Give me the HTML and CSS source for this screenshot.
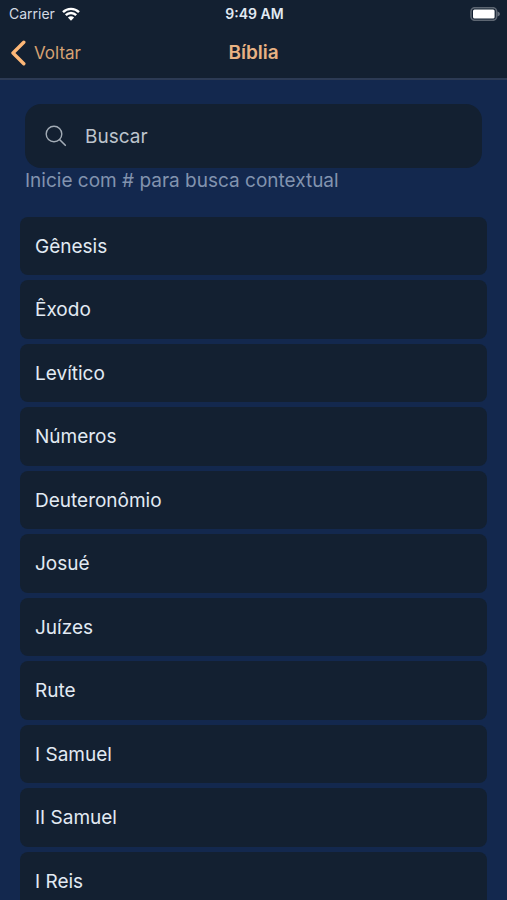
FILE: index.html
```
<!DOCTYPE html>
<html lang="pt-BR">
<head>
<meta charset="utf-8">
<meta name="viewport" content="width=device-width, initial-scale=1">
<title>Bíblia</title>
<link rel="stylesheet" href="styles.css">
</head>
<body>
<header class="header">
  <div class="status">
    <div class="carrier">
      <span>Carrier</span>
      <svg class="wifi" viewBox="0 0 18 14" aria-hidden="true">
        <path d="M1 5.2C5.4.7 12.6.7 17 5.2M3.8 8.2c2.9-2.9 7.500-2.900 10.400 0" fill="none" stroke="currentColor" stroke-width="2.400"/>
        <path d="M5.900 10.600c1.700-1.700 4.500-1.700 6.200 0L9 13.700z" fill="currentColor"/>
      </svg>
    </div>
    <time class="clock">9:49 AM</time>
    <svg class="battery" viewBox="0 0 30 14" aria-hidden="true">
      <rect x="1" y="0.700" width="25.600" height="12.600" rx="3.800" fill="none" stroke="#5d6672" stroke-width="1.600"/>
      <rect x="3" y="2.400" width="21.600" height="9.200" rx="1.500" fill="#fff"/>
      <path d="M27.500 4.500c3.200 1.200 3.200 3.800 0 5z" fill="#68717d"/>
    </svg>
  </div>
  <nav class="nav">
    <a class="back" href="#">
      <svg class="chevron" viewBox="0 0 16 26" aria-hidden="true"><path d="M13.800 2.200 3 13l10.800 10.800" fill="none" stroke="#fdb777" stroke-width="3.400" stroke-linecap="round" stroke-linejoin="round"/></svg>
      <span>Voltar</span>
    </a>
    <h1 class="title">Bíblia</h1>
  </nav>
</header>
<main class="main">
  <form class="search">
    <label class="field">
      <svg class="lens" viewBox="0 0 22 22" aria-hidden="true"><circle cx="9" cy="9" r="7.800" fill="none" stroke="currentColor" stroke-width="1.400"/><path d="m14.500 14.500 5.800 5.800" fill="none" stroke="currentColor" stroke-width="1.600" stroke-linecap="round"/></svg>
      <input class="input" type="text" placeholder="Buscar" aria-label="Buscar">
    </label>
    <p class="hint">Inicie com # para busca contextual</p>
  </form>
  <ul class="books">
    <li><a class="book" href="#">Gênesis</a></li>
    <li><a class="book" href="#">Êxodo</a></li>
    <li><a class="book" href="#">Levítico</a></li>
    <li><a class="book" href="#">Números</a></li>
    <li><a class="book" href="#">Deuteronômio</a></li>
    <li><a class="book" href="#">Josué</a></li>
    <li><a class="book" href="#">Juízes</a></li>
    <li><a class="book" href="#">Rute</a></li>
    <li><a class="book" href="#">I Samuel</a></li>
    <li><a class="book" href="#">II Samuel</a></li>
    <li><a class="book" href="#">I Reis</a></li>
  </ul>
</main>
</body>
</html>
```
FILE: styles.css
```
* {
  box-sizing: border-box;
}

body {
  margin: 0;
  height: 100vh;
  display: flex;
  flex-direction: column;
  overflow: hidden;
  background: #13284e;
  color: #e2eaf3;
  font-family: Inter, "Liberation Sans", sans-serif;
}

a {
  color: inherit;
  text-decoration: none;
}

.header {
  flex: none;
  background: #132031;
  border-bottom: 2px solid #2c3a54;
}

.status,
.nav {
  display: grid;
  grid-template-columns: 1fr auto 1fr;
  align-items: center;
}

.status {
  height: 27px;
  padding: 0 7px 0 9px;
  font-size: 14px;
}

.carrier {
  display: flex;
  align-items: center;
  gap: 7px;
  color: #d3dae3;
}

.wifi {
  width: 18px;
  height: 14px;
  color: #fff;
}

.clock {
  font-weight: 600;
}

.battery {
  width: 30px;
  height: 14px;
  justify-self: end;
}

.nav {
  height: 51px;
  padding: 0 10px;
}

.back {
  display: flex;
  align-items: center;
  gap: 8px;
  color: #d6a273;
  font-size: 17px;
}

.chevron {
  width: 16px;
  height: 26px;
}

.title {
  margin: 0;
  color: #e8b283;
  font-size: 19px;
  font-weight: 600;
}

.main {
  flex: 1;
  min-height: 0;
  padding: 24px 20px 0;
  overflow-y: auto;
  scrollbar-width: none;
}

.search {
  padding: 0 5px;
}

.field {
  display: flex;
  align-items: center;
  gap: 18px;
  height: 64px;
  padding: 0 20px;
  border-radius: 16px;
  background: #132031;
}

.lens {
  flex: none;
  width: 22px;
  height: 22px;
  color: #a3acb6;
}

.input {
  flex: 1;
  min-width: 0;
  padding: 0;
  border: 0;
  outline: 0;
  background: none;
  color: #e2eaf3;
  font: inherit;
  font-size: 19px;
}

.input::placeholder {
  color: #bdc4cc;
  opacity: 1;
}

.hint {
  margin: 0 0 23px;
  color: #8293ae;
  font-size: 19px;
  line-height: 26px;
}

.books {
  display: flex;
  flex-direction: column;
  gap: 5px;
  margin: 0;
  padding: 0;
  list-style: none;
}

.book {
  display: flex;
  align-items: center;
  height: 58px;
  padding: 0 15px;
  border-radius: 8px;
  background: #132031;
  font-size: 19px;
}

.books li:nth-child(even) .book {
  height: 59px;
}
```
